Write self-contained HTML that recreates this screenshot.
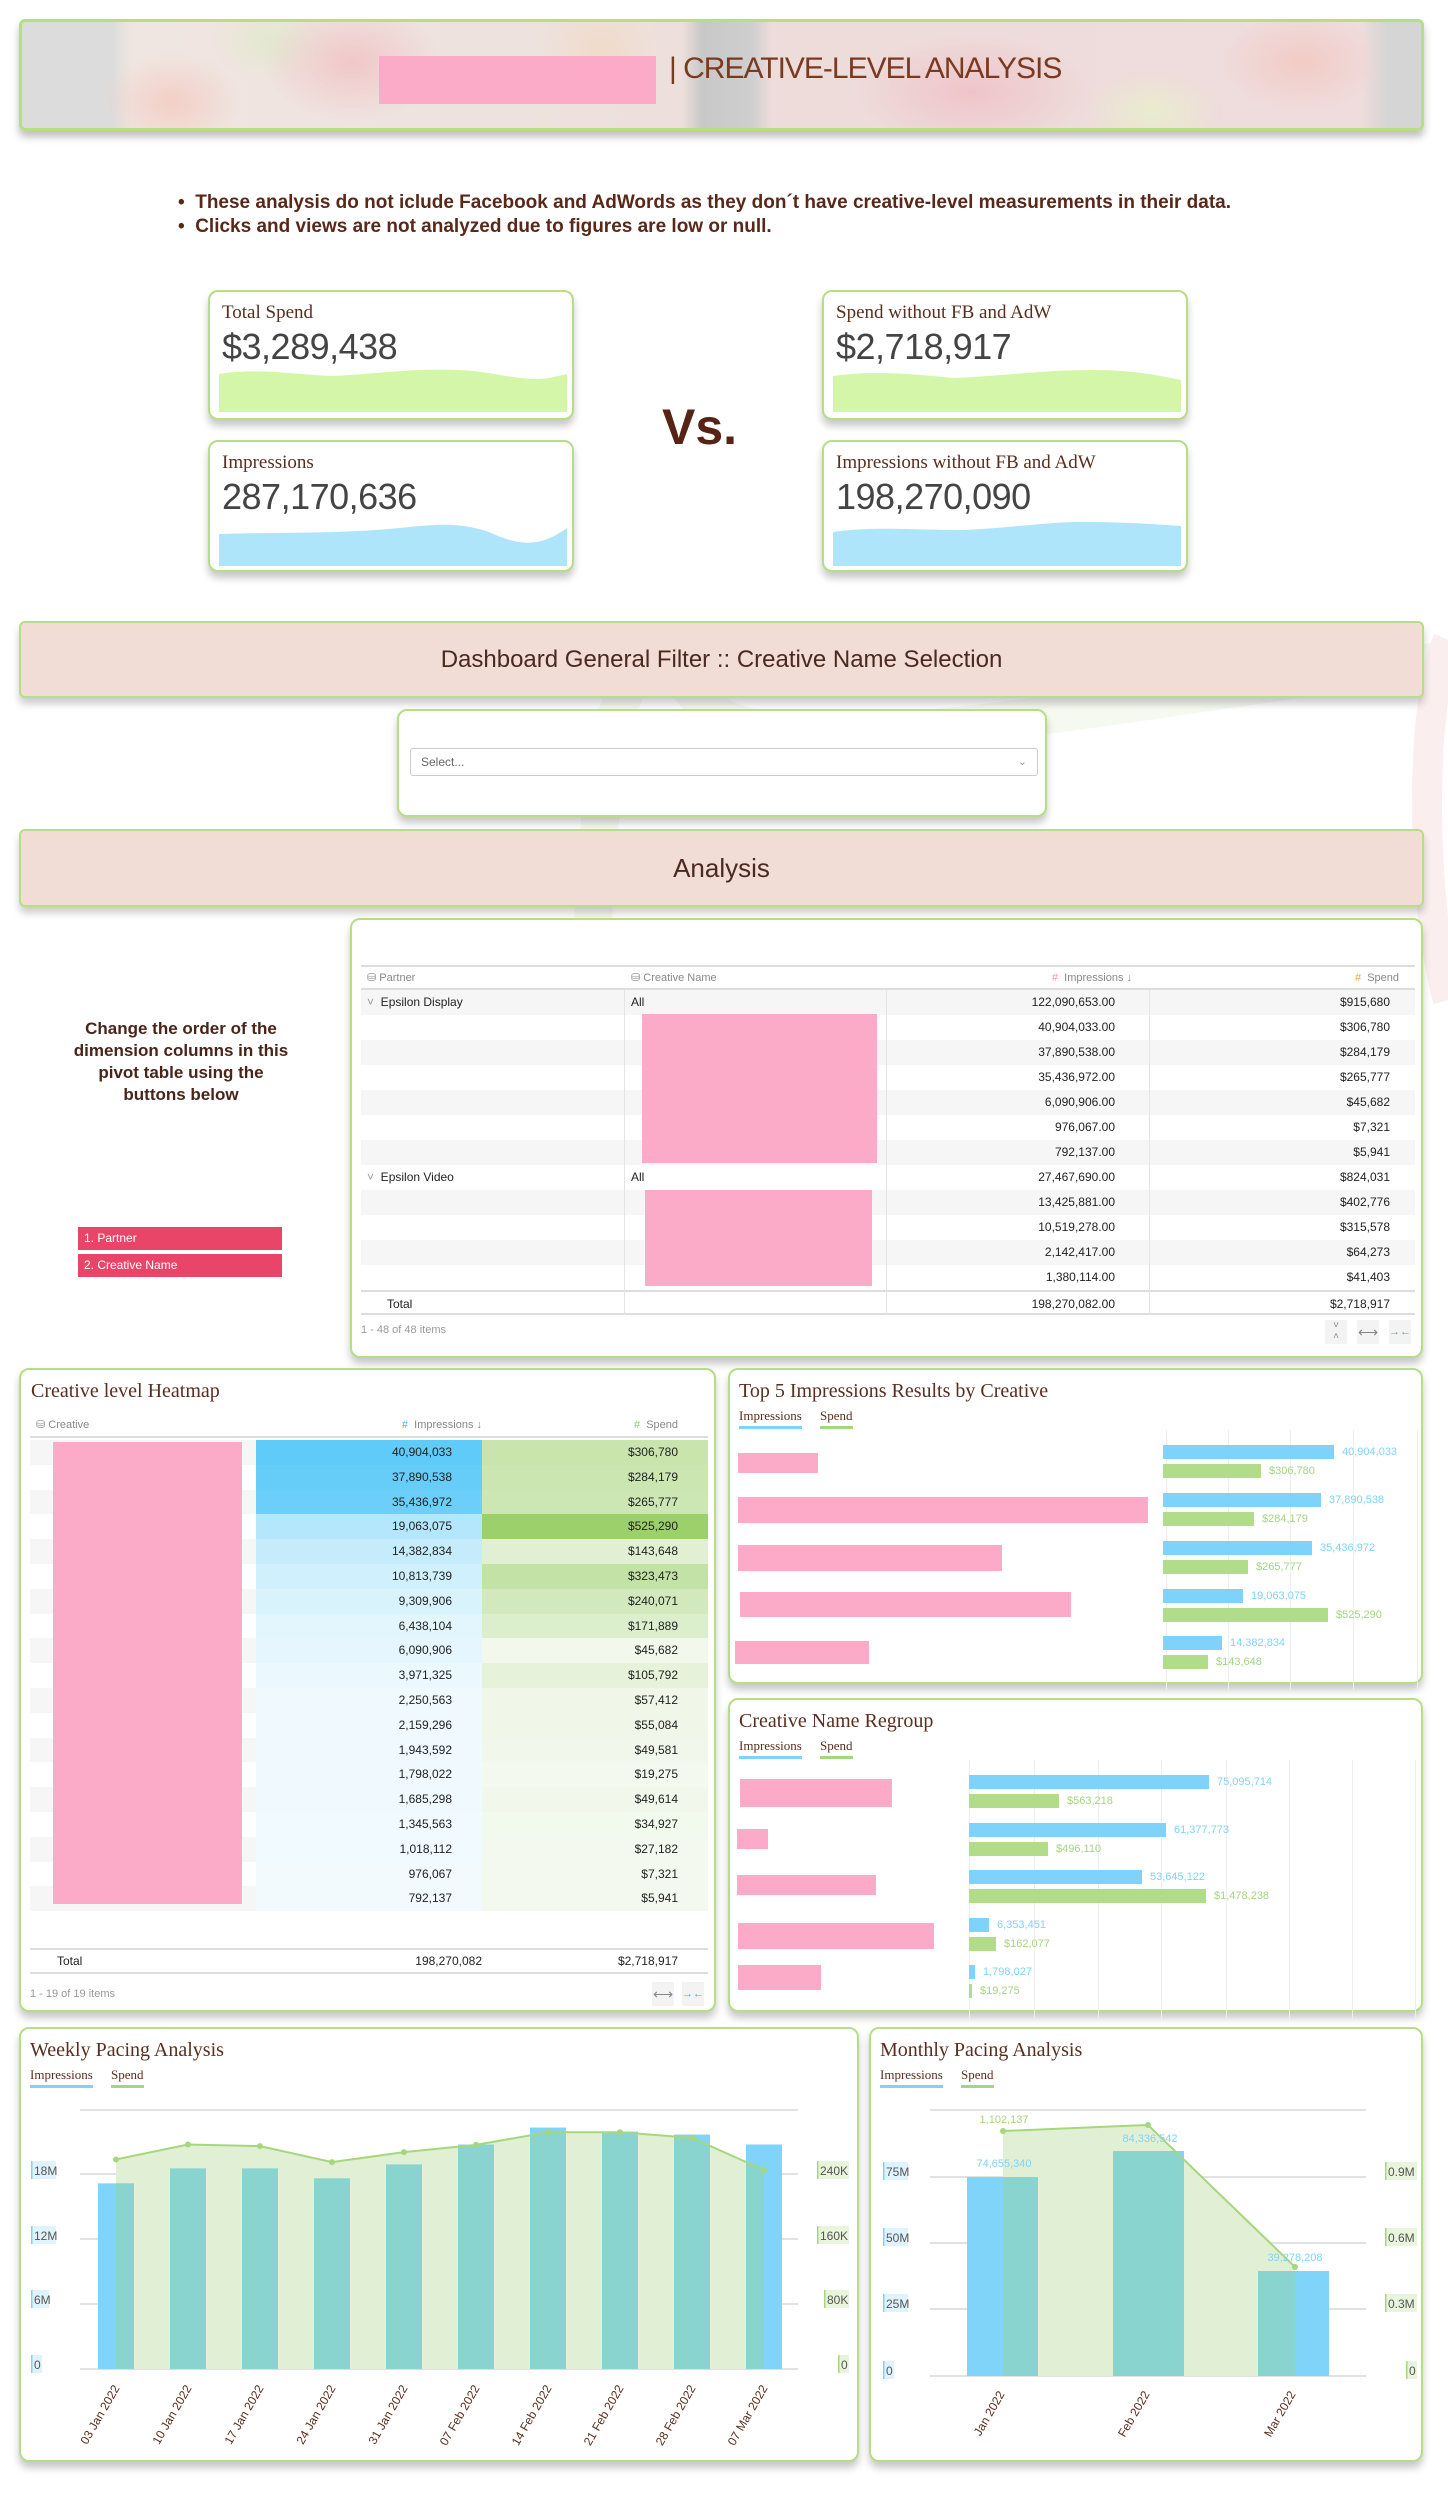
<!DOCTYPE html>
<html><head><meta charset="utf-8">
<style>
*{box-sizing:border-box;margin:0;padding:0}
body{width:1448px;height:2515px;position:relative;background:#fff;font-family:"Liberation Sans Narrow","Liberation Sans",sans-serif;color:#333;overflow:hidden}
.a{position:absolute}
.card{position:absolute;background:#fff;border:2px solid #b5de85;border-radius:10px;box-shadow:0 6px 8px rgba(0,0,0,0.22)}
.bar{position:absolute;left:19px;width:1405px;background:#f2dcd6;border:2px solid #b5de85;border-radius:6px;box-shadow:0 6px 8px rgba(0,0,0,0.2);text-align:center;color:#4a2a20;font-family:"Liberation Sans",sans-serif}
.ser{font-family:"Liberation Serif","DejaVu Serif",serif;color:#5a2e1e}
.kt{position:absolute;left:12px;top:10px;font-size:19px}
.kv{position:absolute;left:12px;top:34px;font-size:36px;color:#444;font-family:"Liberation Sans",sans-serif;letter-spacing:-0.5px}
.pink{position:absolute;background:#fbaac8}
.row{position:absolute;height:25px;font-size:12px;line-height:25px}
.r{text-align:right}
.lg{position:absolute;font-size:13px}
.vl{position:absolute;font-size:11px;line-height:13px}
</style></head><body>

<svg class="a" style="left:0;top:0" width="1448" height="2515">
<path d="M590 1000 C600 650 640 620 700 700 C760 780 1100 700 1448 660" stroke="#f5f9f0" stroke-width="38" fill="none"/>
<path d="M1448 640 C1420 700 1420 900 1448 1000" stroke="#fbeeee" stroke-width="30" fill="none"/>
</svg>

<div class="a" style="left:19px;top:19px;width:1405px;height:112px;border:3px solid #b5de85;border-radius:6px;box-shadow:0 6px 8px rgba(0,0,0,0.25);overflow:hidden;background:
radial-gradient(ellipse 90px 60px at 330px 40px,#f0c7c9,transparent),
radial-gradient(ellipse 70px 50px at 150px 80px,#f3cfc7,transparent),
radial-gradient(ellipse 120px 60px at 950px 70px,#efc4c9,transparent),
radial-gradient(ellipse 80px 50px at 1280px 40px,#f2cbc5,transparent),
radial-gradient(ellipse 70px 40px at 1130px 90px,#e8eccd,transparent),
radial-gradient(ellipse 60px 40px at 250px 20px,#e2e9cf,transparent),
radial-gradient(ellipse 60px 60px at 580px 30px,#f1dbc9,transparent),
linear-gradient(90deg,#dcdcdc 0,#dcdcdc 90px,#f0e6e1 110px,#ede0dc 660px,#c8c8c8 680px,#cfcfcf 730px,#eedcdb 750px,#efdcdc 1340px,#d5d5d5 1365px)">
<div class="pink" style="left:357px;top:34px;width:277px;height:48px"></div>
<div class="a" style="left:647px;top:30px;font-size:30px;color:#7a3a20;letter-spacing:-1px;font-family:'Liberation Sans Narrow','Liberation Sans',sans-serif">| CREATIVE-LEVEL ANALYSIS</div>
</div>

<div class="a" style="left:178px;top:191px;font-size:19px;font-weight:bold;color:#5a2818;line-height:24px">
<div>•&nbsp; These analysis do not iclude Facebook and AdWords as they don´t have creative-level measurements in their data.</div>
<div>•&nbsp; Clicks and views are not analyzed due to figures are low or null.</div>
</div>

<div class="card" style="left:208px;top:290px;width:366px;height:130px"><div class="kt ser">Total Spend</div><div class="kv">$3,289,438</div>
<svg class="a" style="left:9px;top:76px" width="348" height="44"><path d="M0 6 C40 0 70 6 110 8 C160 6 190 0 240 2 C280 4 300 14 330 10 L348 6 L348 44 L0 44Z" fill="#d3f6a8"/></svg></div>
<div class="card" style="left:208px;top:440px;width:366px;height:132px"><div class="kt ser">Impressions</div><div class="kv">287,170,636</div>
<svg class="a" style="left:9px;top:80px" width="348" height="44"><path d="M0 12 C60 10 120 12 180 6 C220 2 240 0 270 10 C300 24 320 26 348 6 L348 44 L0 44Z" fill="#aee5fb"/></svg></div>
<div class="card" style="left:822px;top:290px;width:366px;height:130px"><div class="kt ser">Spend without FB and AdW</div><div class="kv">$2,718,917</div>
<svg class="a" style="left:9px;top:76px" width="348" height="44"><path d="M0 8 C40 2 80 6 120 10 C170 8 210 2 260 2 C300 2 330 8 348 12 L348 44 L0 44Z" fill="#d3f6a8"/></svg></div>
<div class="card" style="left:822px;top:440px;width:366px;height:132px"><div class="kt ser">Impressions without FB and AdW</div><div class="kv">198,270,090</div>
<svg class="a" style="left:9px;top:80px" width="348" height="44"><path d="M0 10 C40 4 80 8 130 8 C180 6 210 0 250 0 C290 0 320 2 348 4 L348 44 L0 44Z" fill="#aee5fb"/></svg></div>
<div class="a" style="left:662px;top:398px;font-size:50px;font-weight:bold;color:#552414;font-family:'Liberation Sans Narrow','Liberation Sans',sans-serif">Vs.</div>

<div class="bar" style="top:621px;height:77px;line-height:73px;font-size:24px">Dashboard General Filter :: Creative Name Selection</div>
<div class="card" style="left:397px;top:709px;width:650px;height:108px">
<div class="a" style="left:11px;top:37px;width:628px;height:28px;border:1px solid #ccc;border-radius:3px;font-size:12px;color:#666;line-height:26px;padding-left:10px;font-family:'Liberation Sans',sans-serif">Select...<span class="a" style="right:10px;top:0;color:#999;font-size:11px">⌄</span></div></div>

<div class="bar" style="top:829px;height:78px;line-height:74px;font-size:26px">Analysis</div>

<div class="a" style="left:71px;top:1018px;width:220px;text-align:center;font-size:17px;font-weight:bold;color:#4a2418;line-height:22px">Change the order of the dimension columns in this pivot table using the buttons below</div>
<div class="a" style="left:78px;top:1227px;width:204px;height:23px;background:#e94568;color:#fff;font-size:12px;line-height:23px;padding-left:6px">1. Partner</div>
<div class="a" style="left:78px;top:1254px;width:204px;height:23px;background:#e94568;color:#fff;font-size:12px;line-height:23px;padding-left:6px">2. Creative Name</div>

<div class="card" style="left:350px;top:918px;width:1073px;height:440px"></div>
<div class="a" style="left:361px;top:965px;width:1054px;height:350px;font-size:12px;color:#222">
<div class="a" style="left:0;top:0;width:1054px;height:25px;border-top:2px solid #ddd;border-bottom:2px solid #ddd;color:#888;font-size:11px;line-height:22px">
<span class="a" style="left:6px">⛁ Partner</span><span class="a" style="left:270px">⛁ Creative Name</span>
<span class="a" style="right:283px"><b style="color:#f78fb0;font-weight:normal">#</b>&nbsp; Impressions ↓</span><span class="a" style="right:16px"><b style="color:#f0a050;font-weight:normal">#</b>&nbsp; Spend</span></div>
<div id="pv"></div>
</div>
<div class="a" style="left:361px;top:1324px;font-size:11px;color:#999">1 - 48 of 48 items</div>
<div class="a" style="left:1325px;top:1320px;width:22px;height:24px;background:#f3f3f3;font-size:10px;color:#888;text-align:center;line-height:11px">˅<br>˄</div>
<div class="a" style="left:1357px;top:1320px;width:22px;height:24px;background:#f3f3f3;font-size:14px;color:#888;text-align:center;line-height:24px">⟷</div>
<div class="a" style="left:1389px;top:1320px;width:22px;height:24px;background:#f3f3f3;font-size:11px;color:#3aa8f0;text-align:center;line-height:24px">→←</div>

<div class="card" style="left:19px;top:1368px;width:697px;height:644px">
<div class="a ser" style="left:10px;top:10px;font-size:20px">Creative level Heatmap</div>
</div>
<div class="a" style="left:30px;top:1412px;width:678px;height:600px;font-size:12px;color:#222">
<div class="a" style="left:0;top:0;width:678px;height:26px;border-bottom:2px solid #ddd;color:#888;font-size:11px;line-height:26px">
<span class="a" style="left:6px">⛁ Creative</span><span class="a" style="right:226px"><b style="color:#46b5f0;font-weight:normal">#</b>&nbsp; Impressions ↓</span><span class="a" style="right:30px"><b style="color:#8cc860;font-weight:normal">#</b>&nbsp; Spend</span></div>
<div id="hm"></div>
<div class="a" style="left:0;top:536px;width:678px;height:26px;border-top:2px solid #ddd;border-bottom:2px solid #ddd;line-height:22px;font-size:12px">
<span class="a" style="left:27px">Total</span><span class="a" style="right:226px">198,270,082</span><span class="a" style="right:30px">$2,718,917</span></div>
<div class="a" style="left:0;top:576px;font-size:11px;color:#999">1 - 19 of 19 items</div>
<div class="a" style="left:622px;top:570px;width:22px;height:24px;background:#f3f3f3;font-size:14px;color:#888;text-align:center;line-height:24px">⟷</div>
<div class="a" style="left:652px;top:570px;width:22px;height:24px;background:#f3f3f3;font-size:11px;color:#3aa8f0;text-align:center;line-height:24px">→←</div>
</div>

<div class="card" style="left:728px;top:1368px;width:695px;height:316px">
<div class="a ser" style="left:9px;top:10px;font-size:20px">Top 5 Impressions Results by Creative</div>
<div class="lg ser" style="left:9px;top:38px;border-bottom:3px solid #7fd3fa;padding-bottom:2px">Impressions</div>
<div class="lg ser" style="left:90px;top:38px;border-bottom:3px solid #a3d67d;padding-bottom:2px">Spend</div>
</div>
<div id="t5"></div>

<div class="card" style="left:728px;top:1698px;width:695px;height:314px">
<div class="a ser" style="left:9px;top:10px;font-size:20px">Creative Name Regroup</div>
<div class="lg ser" style="left:9px;top:38px;border-bottom:3px solid #7fd3fa;padding-bottom:2px">Impressions</div>
<div class="lg ser" style="left:90px;top:38px;border-bottom:3px solid #a3d67d;padding-bottom:2px">Spend</div>
</div>
<div id="rg"></div>

<div class="card" style="left:19px;top:2027px;width:840px;height:435px">
<div class="a ser" style="left:9px;top:10px;font-size:20px">Weekly Pacing Analysis</div>
<div class="lg ser" style="left:9px;top:38px;border-bottom:3px solid #7fd3fa;padding-bottom:2px">Impressions</div>
<div class="lg ser" style="left:90px;top:38px;border-bottom:3px solid #a3d67d;padding-bottom:2px">Spend</div>
</div>
<svg class="a" style="left:0;top:2080px" width="870" height="380" id="wk"></svg>

<div class="card" style="left:869px;top:2027px;width:554px;height:435px">
<div class="a ser" style="left:9px;top:10px;font-size:20px">Monthly Pacing Analysis</div>
<div class="lg ser" style="left:9px;top:38px;border-bottom:3px solid #7fd3fa;padding-bottom:2px">Impressions</div>
<div class="lg ser" style="left:90px;top:38px;border-bottom:3px solid #a3d67d;padding-bottom:2px">Spend</div>
</div>
<svg class="a" style="left:0;top:2080px" width="1448" height="380" id="mo"></svg>

<script>
(function(){
var rows=[["Epsilon Display","All","122,090,653.00","$915,680",1],["","","40,904,033.00","$306,780"],["","","37,890,538.00","$284,179"],["","","35,436,972.00","$265,777"],["","","6,090,906.00","$45,682"],["","","976,067.00","$7,321"],["","","792,137.00","$5,941"],["Epsilon Video","All","27,467,690.00","$824,031",1],["","","13,425,881.00","$402,776"],["","","10,519,278.00","$315,578"],["","","2,142,417.00","$64,273"],["","","1,380,114.00","$41,403"],["Total","","198,270,082.00","$2,718,917",2]];
var h="";
rows.forEach(function(r,i){var y=25+i*25;var bg=(i%2==0&&i<12)?"#f6f6f6":"#fff";
var st=r[4]==2?"border-top:2px solid #ddd;border-bottom:2px solid #ddd;":"";
h+='<div class="row" style="left:0;top:'+y+'px;width:1054px;background:'+bg+';'+st+'">'+
(r[0]?'<span class="a" style="left:'+(r[4]==2?26:6)+'px">'+(r[4]==1?'<span style="color:#999">˅</span>&nbsp; ':'')+r[0]+'</span>':'')+
(r[1]?'<span class="a" style="left:270px">'+r[1]+'</span>':'')+
'<span class="a" style="right:300px">'+r[2]+'</span><span class="a" style="right:25px">'+r[3]+'</span></div>';});
h+='<div class="a" style="left:263px;top:25px;width:1px;height:325px;background:#e4e4e4"></div><div class="a" style="left:525px;top:25px;width:1px;height:325px;background:#e4e4e4"></div><div class="a" style="left:788px;top:25px;width:1px;height:325px;background:#e4e4e4"></div>';
h+='<div class="pink" style="left:281px;top:49px;width:235px;height:149px"></div><div class="pink" style="left:284px;top:225px;width:227px;height:96px"></div>';
document.getElementById("pv").innerHTML=h;
})();
(function(){
var d=[["40,904,033","$306,780","#5fcbf9","#c9e5ad"],["37,890,538","$284,179","#66cdf9","#cbe6b1"],["35,436,972","$265,777","#6bcff9","#cde7b4"],["19,063,075","$525,290","#b4e6fc","#9bd06b"],["14,382,834","$143,648","#c6ecfc","#e1f0d3"],["10,813,739","$323,473","#d1f0fd","#c3e2a6"],["9,309,906","$240,071","#d9f3fd","#d2e9be"],["6,438,104","$171,889","#e3f6fe","#dcefcd"],["6,090,906","$45,682","#e5f6fe","#f2f9ec"],["3,971,325","$105,792","#ebf8fe","#e6f3da"],["2,250,563","$57,412","#eff9fe","#f0f7e9"],["2,159,296","$55,084","#eff9fe","#f0f7e9"],["1,943,592","$49,581","#f0f9fe","#f1f8eb"],["1,798,022","$19,275","#f0f9fe","#f3f9ee"],["1,685,298","$49,614","#f0f9fe","#f1f8eb"],["1,345,563","$34,927","#f1fafe","#f2f9ed"],["1,018,112","$27,182","#f1fafe","#f3f9ee"],["976,067","$7,321","#f2fafe","#f4f9ef"],["792,137","$5,941","#f2fafe","#f4f9ef"]];
var h="";d.forEach(function(r,i){var y=28+i*24.8;
h+='<div class="row" style="left:0;top:'+y+'px;width:226px;background:'+(i%2==0?"#f6f6f6":"#fff")+'"></div>'+
'<div class="row r" style="left:226px;top:'+y+'px;width:226px;padding-right:30px;background:'+r[2]+'">'+r[0]+'</div>'+
'<div class="row r" style="left:452px;top:'+y+'px;width:226px;padding-right:30px;background:'+r[3]+'">'+r[1]+'</div>';});
h+='<div class="pink" style="left:23px;top:30px;width:189px;height:462px"></div>';
document.getElementById("hm").innerHTML=h;
})();
function bars(id,top,grid,pinks,bx,groups){
var h='';grid.forEach(function(x){h+='<div class="a" style="left:'+x+'px;top:'+(top)+'px;width:1px;height:'+(groups.length*48+20)+'px;background:#eee"></div>';});
pinks.forEach(function(p){h+='<div class="pink" style="left:'+p[0]+'px;top:'+p[1]+'px;width:'+p[2]+'px;height:'+p[3]+'px"></div>';});
groups.forEach(function(g){
h+='<div class="a" style="left:'+bx+'px;top:'+g[0]+'px;width:'+g[1]+'px;height:14px;background:#7fd3fa"></div><div class="vl" style="left:'+(bx+g[1]+8)+'px;top:'+(g[0]+1)+'px;color:#7fd3fa">'+g[2]+'</div>';
h+='<div class="a" style="left:'+bx+'px;top:'+(g[0]+19)+'px;width:'+g[3]+'px;height:14px;background:#b1dc8a"></div><div class="vl" style="left:'+(bx+g[3]+8)+'px;top:'+(g[0]+20)+'px;color:#a3d67d">'+g[4]+'</div>';});
document.getElementById(id).innerHTML=h;}
bars("t5",1430,[1166,1228,1290,1353,1417],[[738,1453,80,20],[738,1497,410,26],[738,1545,264,26],[740,1592,331,25],[735,1641,134,23]],1163,
[[1445,171,"40,904,033",98,"$306,780"],[1493,158,"37,890,538",91,"$284,179"],[1541,149,"35,436,972",85,"$265,777"],[1589,80,"19,063,075",165,"$525,290"],[1636,59,"14,382,834",45,"$143,648"]]);
bars("rg",1760,[969,1034,1098,1161,1226,1289,1352,1415],[[740,1779,152,28],[737,1829,31,20],[737,1875,139,20],[738,1923,196,26],[738,1965,83,25]],969,
[[1775,240,"75,095,714",90,"$563,218"],[1823,197,"61,377,773",79,"$496,110"],[1870,173,"53,645,122",237,"$1,478,238"],[1918,20,"6,353,451",27,"$162,077"],[1965,6,"1,798,027",3,"$19,275"]]);
(function(){
var o=2080,s='',base=2369-o;
[2110,2174,2239,2304,2369].forEach(function(y){s+='<line x1="80" x2="798" y1="'+(y-o)+'" y2="'+(y-o)+'" stroke="#e2e2e2" stroke-width="2"/>';});
var tops=[492,447,447,477,435,375,324,336,345,375].map(function(v){return 2020+v*0.332-o;});
var sp=[420,375,380,428,398,376,338,338,355,452].map(function(v){return 2020+v*0.332-o;});
var poly='116,'+base;var bs='';
for(var i=0;i<10;i++){var x=98+i*72;bs+='<rect x="'+x+'" y="'+tops[i]+'" width="36" height="'+(base-tops[i])+'"/>';poly+=' '+(116+i*72)+','+sp[i];}
poly+=' '+(116+9*72)+','+base;
s+='<defs><clipPath id="wc"><polygon points="'+poly+'"/></clipPath></defs>';
s+='<polygon points="'+poly+'" fill="#e1f0d5"/>';
s+='<g fill="#80d4fa">'+bs+'</g><g fill="#8ad4d0" clip-path="url(#wc)">'+bs+'</g>';
var pl=poly.split(' ').slice(1,-1).join(' ');
s+='<polyline points="'+pl+'" fill="none" stroke="#a6d77c" stroke-width="2"/>';
pl.split(' ').forEach(function(p){var q=p.split(',');s+='<circle cx="'+q[0]+'" cy="'+q[1]+'" r="3" fill="#a6d77c"/>';});
var L=[["18M",2171],["12M",2236],["6M",2300],["0",2365]],R=[["240K",2171],["160K",2236],["80K",2300],["0",2365]];
L.forEach(function(l){s+='<rect x="31" y="'+(l[1]-o-10)+'" width="'+(l[0].length*7+4)+'" height="18" fill="#dff3fd"/><rect x="31" y="'+(l[1]-o-10)+'" width="1.5" height="18" fill="#7fd3fa"/><text x="34" y="'+(l[1]-o+4)+'" font-size="12" fill="#555" font-family="Liberation Sans Narrow,Liberation Sans,sans-serif">'+l[0]+'</text>';});
R.forEach(function(l){var w=l[0].length*7+4,x=849-w;s+='<rect x="'+x+'" y="'+(l[1]-o-10)+'" width="'+w+'" height="18" fill="#e8f4dc"/><rect x="'+x+'" y="'+(l[1]-o-10)+'" width="1.5" height="18" fill="#a6d77c"/><text x="'+(x+3)+'" y="'+(l[1]-o+4)+'" font-size="12" fill="#555" font-family="Liberation Sans Narrow,Liberation Sans,sans-serif">'+l[0]+'</text>';});
var lab=["03 Jan 2022","10 Jan 2022","17 Jan 2022","24 Jan 2022","31 Jan 2022","07 Feb 2022","14 Feb 2022","21 Feb 2022","28 Feb 2022","07 Mar 2022"];
lab.forEach(function(t,i){var x=120+i*72,y=2388-o;s+='<text x="'+x+'" y="'+y+'" transform="rotate(-60 '+x+' '+y+')" text-anchor="end" font-size="12" fill="#5a2e1e" font-family="Liberation Sans,sans-serif">'+t+'</text>';});
document.getElementById("wk").innerHTML=s;
})();
(function(){
var o=2080,s='',base=2376-o;
[2110,2177,2243,2309,2376].forEach(function(y){s+='<line x1="930" x2="1366" y1="'+(y-o)+'" y2="'+(y-o)+'" stroke="#e2e2e2" stroke-width="2"/>';});
var bs='<rect x="967" y="'+(2177-o)+'" width="71" height="'+(base-(2177-o))+'"/><rect x="1113" y="'+(2151-o)+'" width="71" height="'+(base-(2151-o))+'"/><rect x="1258" y="'+(2271-o)+'" width="71" height="'+(base-(2271-o))+'"/>';
var poly='1003,'+base+' 1003,'+(2131-o)+' 1148,'+(2125-o)+' 1295,'+(2267-o)+' 1295,'+base;
s+='<defs><clipPath id="mc"><polygon points="'+poly+'"/></clipPath></defs><polygon points="'+poly+'" fill="#e1f0d5"/>';
s+='<g fill="#80d4fa">'+bs+'</g><g fill="#8ad4d0" clip-path="url(#mc)">'+bs+'</g>';
s+='<polyline points="1003,'+(2131-o)+' 1148,'+(2125-o)+' 1295,'+(2267-o)+'" fill="none" stroke="#a6d77c" stroke-width="2"/>';
[[1003,2131],[1148,2125],[1295,2267]].forEach(function(p){s+='<circle cx="'+p[0]+'" cy="'+(p[1]-o)+'" r="3" fill="#a6d77c"/>';});
var f='font-family="Liberation Sans Narrow,Liberation Sans,sans-serif" font-size="11" text-anchor="middle"';
s+='<text x="1004" y="'+(2123-o)+'" fill="#a6d77c" '+f+'>1,102,137</text><text x="1150" y="'+(2142-o)+'" fill="#7fd3fa" '+f+'>84,336,542</text><text x="1004" y="'+(2167-o)+'" fill="#7fd3fa" '+f+'>74,655,340</text><text x="1295" y="'+(2261-o)+'" fill="#7fd3fa" '+f+'>39,278,208</text>';
var L=[["75M",2172],["50M",2238],["25M",2304],["0",2371]],R=[["0.9M",2172],["0.6M",2238],["0.3M",2304],["0",2371]];
L.forEach(function(l){s+='<rect x="883" y="'+(l[1]-o-10)+'" width="'+(l[0].length*7+4)+'" height="18" fill="#dff3fd"/><rect x="883" y="'+(l[1]-o-10)+'" width="1.5" height="18" fill="#7fd3fa"/><text x="886" y="'+(l[1]-o+4)+'" font-size="12" fill="#555" font-family="Liberation Sans Narrow,Liberation Sans,sans-serif">'+l[0]+'</text>';});
R.forEach(function(l){var w=l[0].length*7+4,x=1417-w;s+='<rect x="'+x+'" y="'+(l[1]-o-10)+'" width="'+w+'" height="18" fill="#e8f4dc"/><rect x="'+x+'" y="'+(l[1]-o-10)+'" width="1.5" height="18" fill="#a6d77c"/><text x="'+(x+3)+'" y="'+(l[1]-o+4)+'" font-size="12" fill="#555" font-family="Liberation Sans Narrow,Liberation Sans,sans-serif">'+l[0]+'</text>';});
[["Jan 2022",1005],["Feb 2022",1150],["Mar 2022",1296]].forEach(function(t){var y=2394-o;s+='<text x="'+t[1]+'" y="'+y+'" transform="rotate(-60 '+t[1]+' '+y+')" text-anchor="end" font-size="12" fill="#5a2e1e" font-family="Liberation Sans,sans-serif">'+t[0]+'</text>';});
document.getElementById("mo").innerHTML=s;
})();
</script>
</body></html>
